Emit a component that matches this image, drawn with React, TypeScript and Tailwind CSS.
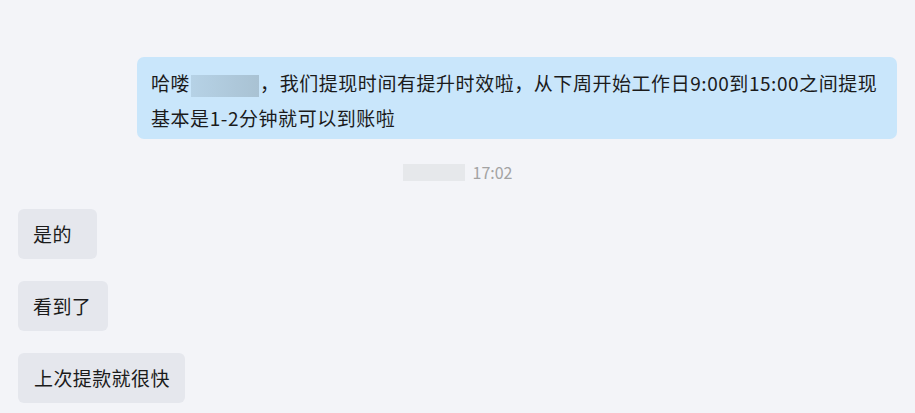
import React from "react";

const font = { fontFamily: '"Noto Sans CJK SC", "Noto Sans", sans-serif' };

export default function App() {
  return (
    <div
      className="w-[915px] h-[413px] overflow-hidden bg-[#f3f4f8] text-[#1b1b1b] flex flex-col"
      style={font}
    >
      <div className="flex justify-end pt-[57px] pr-[18px]">
        <div className="w-[760px] bg-[#c9e6fb] rounded-[7px] pl-[14px] pr-[8px] pt-[8px] pb-[4px] text-[19px] leading-[35px] tracking-[0.55px]">
          哈喽
          <span className="inline-block align-middle w-[68px] h-[22px] mx-[1px] bg-gradient-to-r from-[#b6d2e6] to-[#a9c2d3]" />
          ，我们提现时间有提升时效啦，从下周开始工作日9:00到15:00之间提现基本是1-2分钟就可以到账啦
        </div>
      </div>

      <div className="flex justify-center items-center gap-[8px] mt-[23px]">
        <div className="w-[62px] h-[17px] bg-[#e6e8eb]" />
        <span className="text-[16px] text-[#a3a3a3] leading-[20px]">17:02</span>
      </div>

      <div className="flex flex-col items-start gap-[22px] pl-[18px] mt-[27px]">
        <div className="min-w-[79px] h-[50px] bg-[#e5e7ed] rounded-[6px] pl-[15px] pr-[15px] text-[19px] leading-[50px] tracking-[0.4px]">
          是的
        </div>
        <div className="h-[50px] bg-[#e5e7ed] rounded-[6px] pl-[15px] pr-[17px] text-[19px] leading-[50px] tracking-[0.4px]">
          看到了
        </div>
        <div className="h-[50px] bg-[#e5e7ed] rounded-[6px] pl-[16px] pr-[15px] text-[19px] leading-[50px] tracking-[0.4px]">
          上次提款就很快
        </div>
      </div>
    </div>
  );
}
